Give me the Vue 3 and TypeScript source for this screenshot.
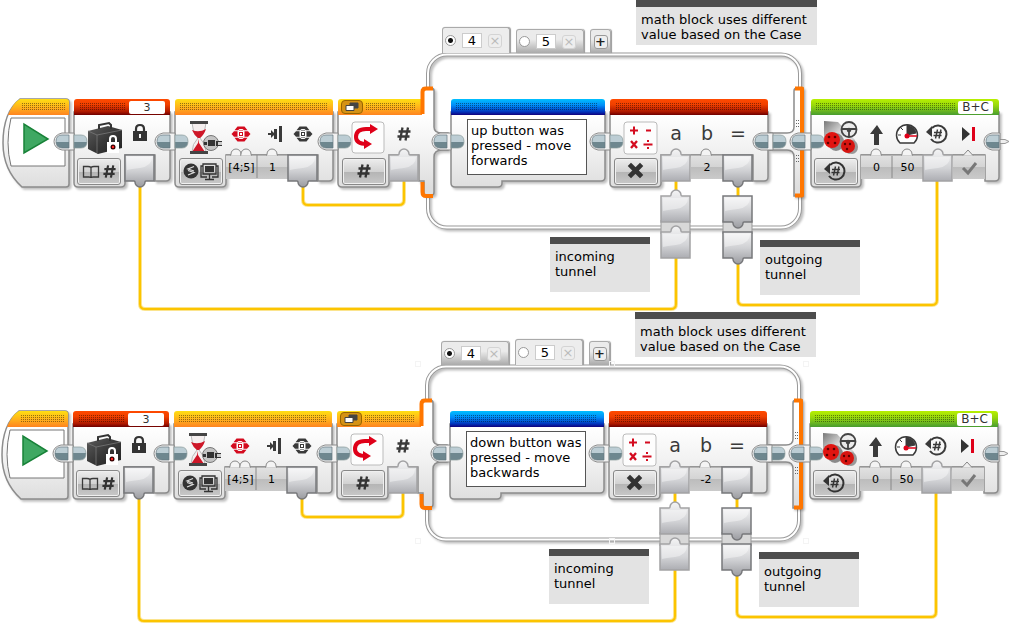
<script setup lang="ts">
import { ref } from 'vue'

interface Note { x: number; y: number; w: number; h: number; text: string }
interface Program {
  id: string
  x: number
  y: number
  raised: string
  handles: boolean
  message: string
  operand: string
  notes: Note[]
}

const notesFor = (): Note[] => [
  { x: 636, y: 0, w: 181, h: 45, text: 'math block uses different\nvalue based on the Case' },
  { x: 550, y: 237, w: 100, h: 55, text: 'incoming\ntunnel' },
  { x: 760, y: 240, w: 100, h: 55, text: 'outgoing\ntunnel' },
]

const programs = ref<Program[]>([
  { id: 'up', x: 0, y: 0, raised: '4', handles: false, message: 'up button was\npressed - move\nforwards', operand: '2', notes: notesFor() },
  { id: 'down', x: -1, y: 312, raised: '5', handles: true, message: 'down button was\npressed - move\nbackwards', operand: '-2', notes: notesFor() },
])
const defaultCase = ref<Record<string, string>>({ up: '4', down: '4' })
const cases = ['4', '5']

interface Brick { x: number; right: number; foot: number; tail: number; notch: number; tone: string; dotsFrom: number; dotsTo: number }
const bricks: Brick[] = [
  { x: 74, right: 170, foot: 125, tail: 155, notch: 155, tone: 'red', dotsFrom: 79, dotsTo: 126 },
  { x: 175, right: 333, foot: 226, tail: 318, notch: 155, tone: 'orange', dotsFrom: 180, dotsTo: 327 },
  { x: 451, right: 605, foot: 502, tail: 502, notch: 181, tone: 'blue', dotsFrom: 456, dotsTo: 598 },
  { x: 610, right: 768, foot: 661, tail: 753, notch: 155, tone: 'red', dotsFrom: 615, dotsTo: 762 },
  { x: 811, right: 999, foot: 861, tail: 985, notch: 155, tone: 'green', dotsFrom: 816, dotsTo: 955 },
]
const bodyPath = (b: Brick) =>
  `M${b.x} 112V183Q${b.x} 187 ${b.x + 4} 187H${b.foot - 4}Q${b.foot} 187 ${b.foot} 183V${b.notch}H${b.tail}V181H${b.right - 4}Q${b.right} 181 ${b.right} 177V112Z`
const headPath = (x: number, right: number) =>
  `M${x} 115V102Q${x} 99 ${x + 3} 99H${right - 3}Q${right} 99 ${right} 102V115Z`

const joints = [
  { plug: 56, socket: 74 }, { plug: 157, socket: 175 }, { plug: 320, socket: 338 },
  { plug: 434, socket: 451 }, { plug: 592, socket: 610 }, { plug: 755, socket: 773 },
  { plug: 792, socket: 811 },
]

interface Box { x: number; y: number; h: number; up: boolean; dark: boolean }
const boxes: Box[] = [
  { x: 125, y: 155, h: 26, up: false, dark: true },
  { x: 288, y: 155, h: 26, up: false, dark: true },
  { x: 389, y: 155, h: 26, up: true, dark: false },
  { x: 661, y: 155, h: 26, up: true, dark: false },
  { x: 723, y: 155, h: 26, up: false, dark: true },
  { x: 923, y: 155, h: 26, up: true, dark: false },
  { x: 661, y: 196, h: 26, up: true, dark: false },
  { x: 723, y: 196, h: 26, up: false, dark: true },
  { x: 661, y: 232, h: 26, up: true, dark: false },
  { x: 723, y: 232, h: 26, up: false, dark: true },
]
const boxPath = (b: Box) => b.up
  ? `M${b.x} ${b.y}h9q1 0 1-1a5 5 0 0 1 10 0q0 1 1 1h8v${b.h}h-29z`
  : `M${b.x} ${b.y}h29v${b.h}h-8q-1 0-1 1a5 5 0 0 1-10 0q0-1-1-1h-9z`

const slots = [
  { x: 226, w: 31, bumps: [236, 246] }, { x: 257, w: 31, bumps: [272] },
  { x: 691, w: 32, bumps: [706] },
  { x: 861, w: 31, bumps: [876] }, { x: 892, w: 31, bumps: [907] }, { x: 953, w: 32, bumps: [] },
]
const params = [
  { x: 226, w: 31, label: 'Buttons', value: '[4;5]' },
  { x: 257, w: 31, label: 'State', value: '1' },
  { x: 861, w: 31, label: 'Steering', value: '0' },
  { x: 892, w: 31, label: 'Power', value: '50' },
]
const modes = [
  { x: 77, icon: 'm-read', label: 'Read numeric' },
  { x: 179, icon: 'm-compare', label: 'Compare brick buttons' },
  { x: 342, icon: 'm-hash', label: 'Numeric switch' },
  { x: 614, icon: 'm-times', label: 'Multiply' },
  { x: 814, icon: 'm-rotate', label: 'On for rotations' },
]
const wires = [
  'M140 185V304Q140 309 145 309H671Q676 309 676 304V256',
  'M303 185V200Q303 205 308 205H399Q404 205 404 200V178',
  'M676 178V200', 'M738 180V200',
  'M738 260V300Q738 305 743 305H932Q937 305 937 300V178',
]
const handles = [[419, 364], [419, 541], [807, 364], [807, 541], [419, 453], [613, 364], [613, 541]]
const at = (x: number, y: number, w?: number, h?: number) => ({
  left: `${x}px`, top: `${y}px`,
  ...(w ? { width: `${w}px` } : {}), ...(h ? { height: `${h}px` } : {}),
})
</script>

<template>
  <main class="canvas">
    <svg class="library" aria-hidden="true">
      <defs>
        <linearGradient id="g-red" x2="0" y2="1"><stop offset="0" stop-color="#ff4a00" /><stop offset=".35" stop-color="#f04000" /><stop offset=".8" stop-color="#ac1800" /><stop offset="1" stop-color="#6e0000" /></linearGradient>
        <linearGradient id="g-orange" x2="0" y2="1"><stop offset="0" stop-color="#ffdf12" /><stop offset=".5" stop-color="#ffb41c" /><stop offset="1" stop-color="#ff8420" /></linearGradient>
        <linearGradient id="g-blue" x2="0" y2="1"><stop offset="0" stop-color="#00c0ff" /><stop offset=".4" stop-color="#008cf8" /><stop offset=".8" stop-color="#0034bc" /><stop offset="1" stop-color="#10007c" /></linearGradient>
        <linearGradient id="g-green" x2="0" y2="1"><stop offset="0" stop-color="#b8f000" /><stop offset=".4" stop-color="#98d80c" /><stop offset="1" stop-color="#489c30" /></linearGradient>
        <linearGradient id="g-body" gradientUnits="userSpaceOnUse" x1="0" y1="115" x2="0" y2="187"><stop offset="0" stop-color="#fff" /><stop offset=".45" stop-color="#f2f2f2" /><stop offset="1" stop-color="#dedede" /></linearGradient>
        <linearGradient id="g-box" x2="0" y2="1"><stop offset="0" stop-color="#f4f4f5" /><stop offset=".6" stop-color="#d2d3d6" /><stop offset="1" stop-color="#acadb2" /></linearGradient>
        <linearGradient id="g-boxdown" x2="0" y2="1"><stop offset="0" stop-color="#f4f4f5" /><stop offset=".5" stop-color="#cfd0d3" /><stop offset="1" stop-color="#9b9ca1" /></linearGradient>
        <linearGradient id="g-slot" x2="0" y2="1"><stop offset="0" stop-color="#e2e2e2" /><stop offset=".49" stop-color="#d4d4d4" /><stop offset=".5" stop-color="#bcbcbc" /><stop offset="1" stop-color="#cacaca" /></linearGradient>
        <linearGradient id="g-teal" x2="0" y2="1"><stop offset=".5" stop-color="#bccdd4" /><stop offset=".5" stop-color="#6e878f" /></linearGradient>
        <linearGradient id="g-metal" x2="1" y2="1"><stop offset="0" stop-color="#777" /><stop offset=".4" stop-color="#d8d8d8" /><stop offset=".6" stop-color="#eee" /><stop offset="1" stop-color="#777" /></linearGradient>
        <linearGradient id="g-case" x2="1" y2="1"><stop offset="0" stop-color="#5c5c5c" /><stop offset=".5" stop-color="#383838" /><stop offset="1" stop-color="#202020" /></linearGradient>
        <pattern id="dots" width="2" height="2" patternUnits="userSpaceOnUse" x="0" y="103"><rect width="1" height="1" fill="#000" fill-opacity=".42" /></pattern>
      </defs>
      <symbol id="hash" viewBox="0 0 16 16"><path d="M6.500 1.500 4 14.500M12 1.500 9.500 14.500M2.500 5.500h12M1.500 10.500h12" fill="none" stroke="currentColor" stroke-width="2.300" /></symbol>
      <symbol id="keys" viewBox="0 0 20 16">
        <path d="M.500 8 3 5.200h3.500v5.600H3zM19.500 8 17 5.200h-3.500v5.600H17z" fill="currentColor" />
        <path d="M3.500 4.200 6.500.500h7l3 3.700H13L11.500 3h-3L7 4.200zM3.500 11.800l3 3.700h7l3-3.700H13L11.500 13h-3L7 11.800zM8 4.500h4v7H8z" fill="currentColor" />
        <path d="M7.500 5.500h5v5h-5z" fill="currentColor" stroke="#fff" /><path d="M9 7h2v2H9z" fill="#fff" />
      </symbol>
      <symbol id="turn" viewBox="0 0 22 20"><path d="M6 4A8.500 8.500 0 1 1 5 15" fill="none" stroke="currentColor" stroke-width="2" /><path d="M0 8 6 2v11z" fill="currentColor" /><path d="m11.500 5.500-2 9m5.500-9-2 9M8 8.500h8M7.500 11.500h8" fill="none" stroke="currentColor" stroke-width="1.400" /></symbol>
      <symbol id="m-read" viewBox="0 0 44 26"><path d="M14 9.500q-1-1-3-1H6.500v10.500H12q2 0 2 1 0-1 2-1h5.500V8.500H17q-2 0-3 1zV20" fill="none" stroke="#3a3a3a" stroke-width="1.300" /><use href="#hash" x="25" y="6" width="15" height="15" /></symbol>
      <symbol id="m-compare" viewBox="0 0 44 26"><circle cx="12" cy="13" r="7.500" fill="#333" /><path d="M15 8.500 9 11l6 2M9 12.500l6 2-6 2.500" fill="none" stroke="#ddd" stroke-width="1.200" /><path d="M24 6h13v10H24zM30.500 16v5M26 21.500h9M24 8h-2v11h6M37 8h2v11h-6" fill="none" stroke="#333" stroke-width="1.300" /><path d="M26 8h9v6h-9z" fill="#333" /></symbol>
      <symbol id="m-hash" viewBox="0 0 44 26"><use href="#hash" x="14" y="5" width="16" height="16" /></symbol>
      <symbol id="m-times" viewBox="0 0 44 26"><path d="m17 8 9 9m0-9-9 9" stroke="#333" stroke-width="4.600" stroke-linecap="square" /></symbol>
      <symbol id="m-rotate" viewBox="0 0 44 26"><use href="#turn" x="10" y="3" width="22" height="20" /></symbol>
    </svg>

    <section v-for="p in programs" :key="p.id" class="program" :style="at(p.x, p.y)" :aria-label="`Program: ${p.id} button`">
      <svg class="drawing" width="1014" height="312" viewBox="0 0 1014 312" aria-hidden="true">
        <!-- case frame -->
        <g class="frame">
          <rect class="rim" x="428" y="54.500" width="372" height="173" rx="19" />
          <rect class="groove" x="428" y="54.500" width="372" height="173" rx="19" />
        </g>
        <!-- data wires -->
        <g v-for="w in wires" :key="w" class="wire"><path class="halo" :d="w" /><path class="core" :d="w" /></g>

        <!-- start block -->
        <g class="solid">
          <path d="M20 99H66Q69 99 69 102V184Q69 187 66 187H22Q3 170 3 143Q3 112 20 99Z" fill="url(#g-body)" stroke="#8c8c8c" stroke-width="1.500" />
        </g>
        <path d="M8 115Q13 103 20 99H66Q69 99 69 102V115Z" fill="url(#g-orange)" />
        <rect x="21" y="103" width="44" height="7" fill="url(#dots)" />
        <path d="M11 118H65V166H11Q5 143 11 118Z" fill="#fff" stroke="#777" />
        <path d="M24 124v29l24-14z" fill="#3fa862" stroke="#188238" stroke-width="1.500" />

        <!-- switch block -->
        <g class="solid">
          <path d="M338 112V183Q338 187 342 187H385Q389 187 389 183V155H419V181H424V195H432Q434 195 434 192V157Q434 150 442 150H448V133H442Q434 133 434 127V91Q434 88 431 88H423V112Z" fill="url(#g-body)" stroke="#8c8c8c" stroke-width="1.500" />
        </g>
        <path d="M338 115V102Q338 99 341 99H422V115Z" fill="url(#g-orange)" />
        <rect x="366" y="103" width="50" height="7" fill="url(#dots)" />
        <path d="M433 88.500H426Q422.500 88.500 422.500 92V114M422.500 182V192Q422.500 196 426 196H433" class="clamp" />

        <!-- right clamp -->
        <g class="solid"><path d="M803 88H797Q794 88 794 91V127Q794 133 787 133H770V150H787Q794 150 794 157V196H803Z" fill="url(#g-body)" stroke="#8c8c8c" stroke-width="1.500" /></g>
        <path d="M795 88.500H802V195.500H795" class="clamp" />
        <path d="M796.500 120v9M798.500 120v9M796.500 155v9M798.500 155v9" stroke="#666" stroke-dasharray="1 2" />

        <!-- bricks -->
        <g v-for="b in bricks" :key="b.x">
          <path class="solid" :d="bodyPath(b)" fill="url(#g-body)" stroke="#8c8c8c" stroke-width="1.500" />
          <path :d="headPath(b.x, b.right)" :fill="`url(#g-${b.tone})`" />
          <rect :x="b.dotsFrom" y="103" :width="b.dotsTo - b.dotsFrom" height="7" fill="url(#dots)" />
        </g>
        <g v-for="s in slots" :key="s.x">
          <rect :x="s.x" y="155" :width="s.w" height="24" fill="url(#g-slot)" />
          <path :d="`M${s.x} 155h${s.w}`" stroke="#888" />
          <path v-for="c in s.bumps" :key="c" :d="`M${c - 6} 155.500q1 0 1-1.500a5 5 0 0 1 10 0q0 1.500 1 1.500`" fill="#f4f4f4" stroke="#888" />
        </g>
        <path d="M257 155v23M892 156v22" stroke="#888" />
        <path d="m963 155.500 5-5.500 5 5.500" fill="#eee" stroke="#888" />
        <path d="m963 168 5 5 8-10" fill="none" stroke="#777" stroke-width="3" />

        <!-- tunnels and value boxes -->
        <path d="M661 220h29v14h-29zM723 220h29v14h-29z" fill="#d8d8d8" stroke="#999" />
        <g v-for="b in boxes" :key="`${b.x}-${b.y}`">
          <path :d="boxPath(b)" :fill="b.dark ? 'url(#g-boxdown)' : 'url(#g-box)'" :stroke="b.dark ? '#77787b' : '#a2a2a4'" stroke-width="1.500" />
          <path :d="`M${b.x + 2} ${b.y + 2}h25q0 9-12 11-9 1-13 2z`" fill="#fff" fill-opacity=".4" />
        </g>

        <!-- sequence plugs -->
        <path d="M999 139.500h6l4 2-4 2h-6z" fill="#eee" stroke="#999" />
        <g v-for="j in [...joints, { plug: 986, socket: 1000 }]" :key="j.plug">
          <path :d="`M${j.socket} 133H${j.plug + 6}Q${j.plug - 2} 135 ${j.plug - 2} 141.500Q${j.plug - 2} 148 ${j.plug + 6} 150H${j.socket}Z`" fill="#f2f2f2" stroke="#8a8a8a" />
          <path :d="`M${j.plug + 13} 135H${j.plug + 6}Q${j.plug} 135 ${j.plug} 141.500Q${j.plug} 148 ${j.plug + 6} 148H${j.plug + 13}Z`" fill="url(#g-teal)" stroke="#66777e" stroke-width=".7" />
          <path v-if="j.socket < 999" :d="`M${j.socket} 135h7q6 0 6 6.500q0 6.500-6 6.500h-7z`" fill="url(#g-teal)" stroke="#899" stroke-width=".7" />
        </g>

        <!-- suitcase and lock -->
        <path d="m88 131 20-5 14 4v18l-24 6-10-5z" fill="url(#g-case)" />
        <path d="m88 131 9 4 25-5M97 135v18" fill="none" stroke="#777" stroke-width=".8" />
        <path d="M99 129v-4l10-2 2 2v4" fill="none" stroke="#333" stroke-width="2" />
        <path d="M110 143v-4q0-3 3-3t3 3v4" fill="none" stroke="#fff" stroke-width="2" />
        <path d="M107 142h12v11h-12z" fill="#fff" /><circle cx="113" cy="147" r="2.500" fill="#300" /><circle cx="113" cy="147" r="1.200" fill="#f22" />
        <path d="M136 132v-3q0-4 4-4t4 4v3" fill="none" stroke="#333" stroke-width="2.200" />
        <path d="M133 131h14v10h-14zM139 134v4h2v-4z" fill="#333" fill-rule="evenodd" />

        <!-- hourglass -->
        <path d="M192 123h14q0 8-6 15 6 6 6 14h-14q0-8 6-14-6-7-6-15z" fill="#f4eeee" stroke="#bbb" />
        <path d="M192 130q7 3 14-1-2 6-6 9h-2q-4-3-6-8zM199 139v4l6 9h-13l6-9z" fill="#ce1728" />
        <path d="M190 121h18v3h-18zM190 151h18v3h-18z" fill="#444" />
        <circle cx="211" cy="143" r="7.500" fill="#c4c4c4" stroke="#777" />
        <path d="M208 140h7v6h-7zM204 142h3v3h-3zM216 141h6v5h-6z" fill="#333" /><path d="M218 142h4v3h-4z" fill="#ccc" />
        <use href="#keys" x="231" y="126" width="20" height="16" color="#d40b1f" />
        <path d="M268 133h3v-3l4 4-4 4v-3h-3zM274 129h3v10h-3zM279 126h3v16h-3z" fill="#3a3a3a" />
        <use href="#keys" x="293" y="126" width="20" height="16" color="#3a3a3a" />

        <!-- switch icon -->
        <rect class="tile" x="352" y="122" width="32" height="31" rx="3" />
        <path d="M372 129H366Q356 129 356 137Q356 144 367 144" fill="none" stroke="#df0019" stroke-width="4" />
        <path d="m370 124 8 5-8 5zM364 139l8 5-8 5z" fill="#df0019" />
        <use href="#hash" x="396" y="126" width="16" height="16" color="#3a3a3a" />

        <!-- math icon -->
        <rect class="tile" x="624" y="122" width="33" height="32" rx="3" />
        <path d="M630 130.500h8M634 126.500v8M646 130.500h5M643.500 144.500h9" stroke="#d40b1f" stroke-width="2" />
        <path d="m631 141 6 7m0-7-6 7" stroke="#d40b1f" stroke-width="2.300" />
        <path d="M647 140h2v2h-2zM647 147h2v2h-2z" fill="#d40b1f" />
        <g class="letters"><text x="676" y="140">a</text><text x="707" y="140">b</text><text x="738" y="140">=</text></g>

        <!-- motors -->
        <path d="m824 121 14 1 17 18 2 10-8 4-8-4-17-11z" fill="url(#g-metal)" />
        <ellipse cx="836" cy="142" rx="8" ry="9" fill="#8a8a8a" /><ellipse cx="832" cy="140" rx="8" ry="8" fill="#e11410" />
        <ellipse cx="852" cy="147" rx="6" ry="7" fill="#999" /><ellipse cx="848" cy="146" rx="7" ry="7" fill="#d71410" />
        <g fill="#5a0000"><circle cx="829" cy="137" r="1.300" /><circle cx="835" cy="137" r="1.300" /><circle cx="828" cy="143" r="1.300" /><circle cx="835" cy="143" r="1.300" /><circle cx="845" cy="144" r="1.200" /><circle cx="850" cy="144" r="1.200" /><circle cx="847" cy="149" r="1.200" /></g>
        <g fill="none" stroke="#444"><circle cx="849" cy="129.500" r="7.500" fill="#e8e8e8" fill-opacity=".8" stroke-width="1.800" /><path d="M842 129h14M849 131v6" stroke-width="1.800" /></g>
        <circle cx="849" cy="130" r="2.300" fill="#444" />
        <path d="m877 125 6 9h-4v11h-5v-11h-4z" fill="#3a3a3a" />
        <path d="M900 143A10.500 10.500 0 1 1 914 143Z" fill="#fff" stroke="#3a3a3a" stroke-width="1.500" />
        <path d="M907 135V125Q914 126 916 133ZM898 135h3M901 128l2 2" fill="#3a3a3a" stroke="#3a3a3a" />
        <path d="M907 136h10" stroke="#df0019" stroke-width="1.500" /><circle cx="907" cy="136" r="2.500" fill="#df0019" />
        <use href="#turn" x="926" y="124" width="22" height="20" color="#3a3a3a" />
        <path d="m962 127 8 7-8 7z" fill="#333" /><path d="M972 127h3v14h-3z" fill="#df0019" />
      </svg>

      <button type="button" class="pill" aria-label="Port 3" :style="at(129, 101, 36)">3</button>
      <button type="button" class="pill ports" aria-label="Ports B and C" :style="at(958, 101, 35)">B+C</button>
      <button type="button" class="view" aria-label="Switch to tabbed view" :style="at(341, 100, 22, 14)">
        <svg width="14" height="10" viewBox="0 0 14 10"><path d="M5 1h8v5H5z" fill="#444" stroke="#444" /><path d="M1 3.500h8v5H1z" fill="#fff" stroke="#444" /></svg>
      </button>
      <button v-for="m in modes" :key="m.x" type="button" class="mode" :aria-label="m.label" :style="at(m.x, 158)">
        <svg width="44" height="26" viewBox="0 0 44 26"><use :href="`#${m.icon}`" width="44" height="26" /></svg>
      </button>
      <input v-for="i in params" :key="i.x" class="param" :aria-label="i.label" :value="i.value" :style="at(i.x, 160, i.w)">
      <input v-model="p.operand" class="param" aria-label="b" :style="at(691, 160, 32)">

      <div class="tabs" :style="at(442, 27)">
        <div v-for="c in cases" :key="c" class="tab" :class="{ raised: p.raised === c }">
          <input v-model="defaultCase[p.id]" type="radio" :name="`default-${p.id}`" :value="c" :aria-label="`Default case ${c}`">
          <input class="case" :value="c" :aria-label="`Case value ${c}`" @focus="p.raised = c">
          <button type="button" :aria-label="`Delete case ${c}`">×</button>
        </div>
        <div class="tab add"><button type="button" aria-label="Add case">+</button></div>
      </div>

      <textarea v-model="p.message" class="message" aria-label="Comment" spellcheck="false" :style="at(467, 119, 120, 56)" />
      <div v-for="n in p.notes" :key="n.x" class="note" :style="at(n.x, n.y, n.w, n.h)">
        <textarea v-model="n.text" aria-label="Note" spellcheck="false" />
      </div>
      <template v-if="p.handles">
        <span v-for="h in handles" :key="h.join()" class="handle" :style="at(h[0] - 3, h[1] - 315)" />
      </template>
    </section>
  </main>
</template>

<style scoped>
.canvas {
  position: relative;
  min-height: 100vh;
  overflow: hidden;
  background: #fff;
  color: #000;
  font: 13px/15px "DejaVu Sans", sans-serif;
}
.library { position: absolute; width: 0; height: 0; color: #333; }
.program { position: absolute; width: 100%; }
.program > * { position: absolute; box-sizing: border-box; }
.drawing { left: 0; top: 0; overflow: visible; }
.frame, .solid { filter: drop-shadow(2px 2px 1px rgba(0, 0, 0, .25)); }
.frame rect { fill: none; }
.rim { stroke: #9a9a9a; stroke-width: 4; }
.groove { stroke: #fff; stroke-width: 2; }
.wire path { fill: none; }
.halo { stroke: #fbe48e; stroke-width: 4; }
.core { stroke: #fcc400; stroke-width: 2; }
.clamp { fill: none; stroke: #ff7600; stroke-width: 4; stroke-linejoin: round; }
.tile { fill: #fdfdfd; stroke: #bbb; }
.letters { fill: #3a3a3a; font-size: 19px; text-anchor: middle; }

button, input, textarea { margin: 0; padding: 0; box-sizing: border-box; font: inherit; color: inherit; }
.pill {
  height: 13px;
  border: 0;
  border-radius: 2px;
  background: #fff;
  color: #333;
  font-size: 11px;
  line-height: 13px;
}
.pill.ports { font-size: 12px; }
.view {
  display: flex;
  align-items: center;
  justify-content: center;
  border: 1px solid #966400;
  border-radius: 4px;
  background: #d59214;
}
.mode {
  display: flex;
  width: 44px;
  height: 27px;
  border: 1px solid #888;
  border-radius: 3px;
  background: linear-gradient(#ededed, #d2d2d2 50%, #b4b4b4 51%, #c8c8c8);
  box-shadow: inset 0 0 0 1px #f0f0f0;
  color: #333;
}
.mode svg { margin: -1px; }
.param {
  height: 15px;
  border: 0;
  background: transparent;
  font-size: 11px;
  text-align: center;
}

.tabs { display: flex; align-items: flex-end; gap: 6px; height: 26px; }
.tab {
  display: flex;
  align-items: center;
  gap: 6px;
  width: 68px;
  height: 24px;
  padding: 0 3px 0 2px;
  box-sizing: border-box;
  border: 1px solid #aaa;
  border-bottom: 0;
  border-radius: 3px 3px 0 0;
  background: linear-gradient(#ebebeb 40%, #aaa);
  box-shadow: 1px 0 1px #999;
}
.tab.raised { height: 26px; background: #ededed; }
.tab.add { width: 21px; padding: 0; justify-content: center; }
.tab input[type="radio"] {
  flex: none;
  width: 11px;
  height: 11px;
  appearance: none;
  border: 1px solid #999;
  border-radius: 50%;
  background: #fff;
}
.tab input[type="radio"]:checked { background: radial-gradient(circle, #111 1px, #111 2px, #fff 3px); }
.case {
  width: 20px;
  height: 15px;
  border: 1px solid #ccc;
  background: #fff;
  text-align: center;
}
.tab button {
  flex: none;
  width: 14px;
  height: 14px;
  border: 1px solid #d4d4d4;
  border-radius: 3px;
  background: #eee;
  color: #bbb;
  line-height: 12px;
}
.tab.add button { border-color: #999; color: #222; font-weight: 700; }

textarea {
  display: block;
  border: 0;
  resize: none;
  overflow: hidden;
  white-space: pre;
  background: transparent;
}
.message { padding: 3px; border: 1px solid #555; background: #fff; }
.note { border-top: 7px solid #4d4d4d; background: #e3e3e3; }
.note textarea { width: 100%; height: 100%; padding: 5px 5px 0; }
.handle { width: 6px; height: 6px; border: 1px solid #f4f4f4; }
</style>
